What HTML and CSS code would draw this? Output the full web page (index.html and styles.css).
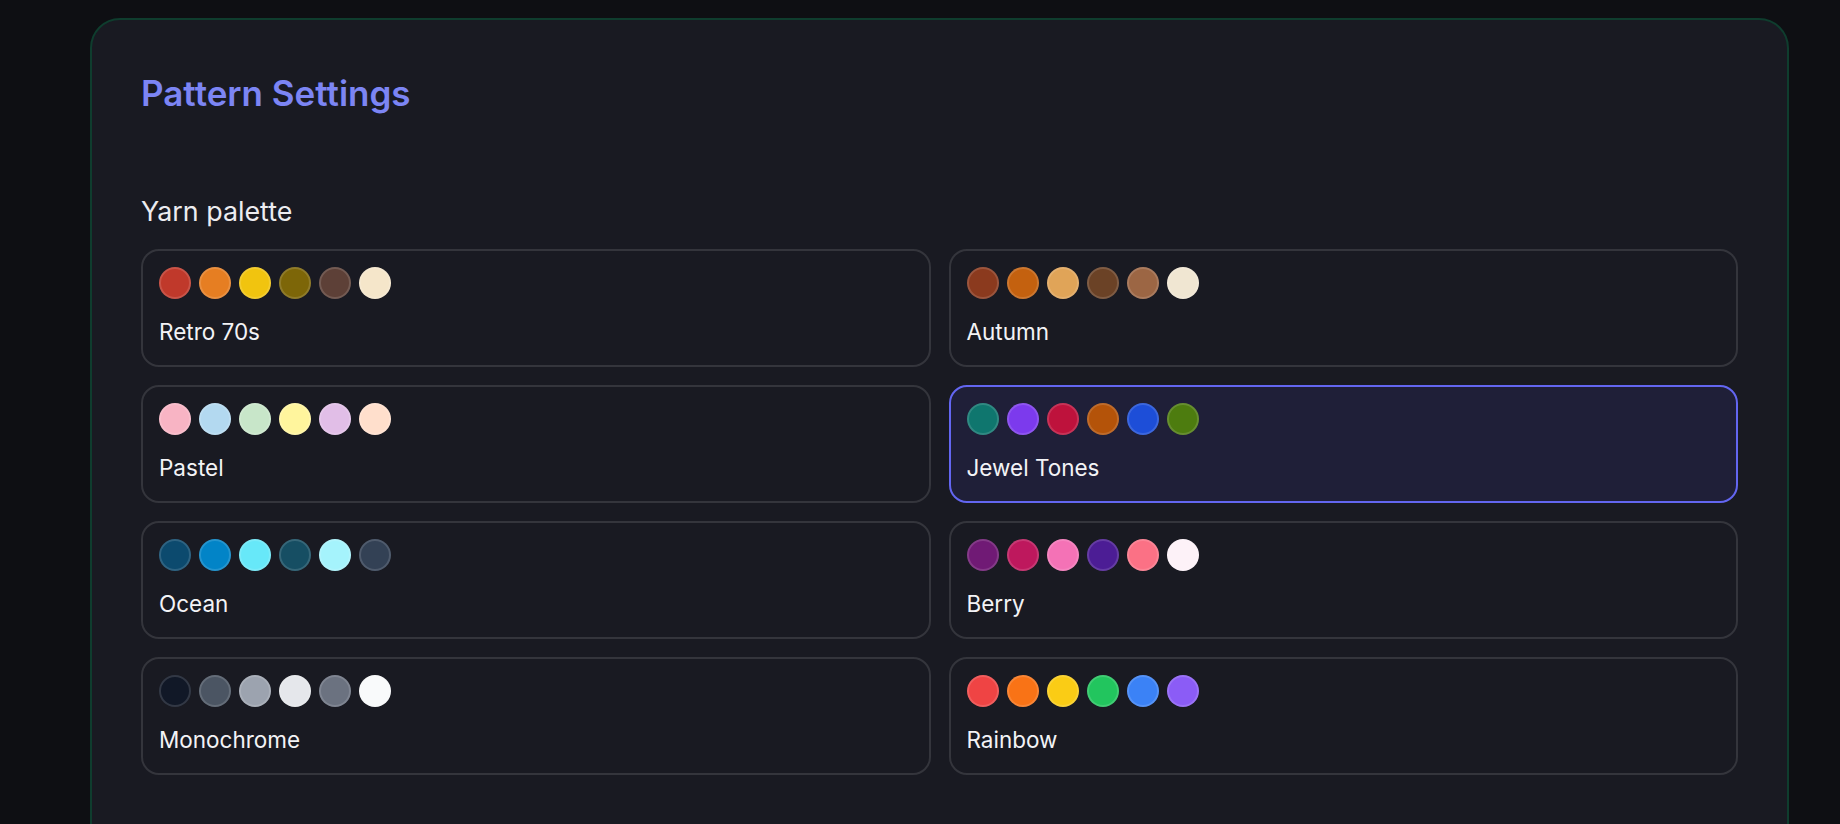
FILE: index.html
```html
<!DOCTYPE html>
<html lang="en">
<head>
  <meta charset="UTF-8" />
  <meta name="viewport" content="width=device-width, initial-scale=1.0" />
  <title>Pattern Settings</title>
  <link rel="stylesheet" href="styles.css">
</head>
<body>
  <div class="settings-panel">
    <h1>Pattern Settings</h1>

    <div class="field">
      <div class="field-label">Yarn palette</div>
      <div class="palette-grid">
        <div class="palette-card">
          <div class="swatches">
            <span class="swatch" style="background:#c0392b"></span>
            <span class="swatch" style="background:#e67e22"></span>
            <span class="swatch" style="background:#f1c40f"></span>
            <span class="swatch" style="background:#7d6608"></span>
            <span class="swatch" style="background:#5d4037"></span>
            <span class="swatch" style="background:#f5e6ca"></span>
          </div>
          <div class="palette-name">Retro 70s</div>
        </div>
        <div class="palette-card">
          <div class="swatches">
            <span class="swatch" style="background:#8b3a1e"></span>
            <span class="swatch" style="background:#c4610f"></span>
            <span class="swatch" style="background:#e0a458"></span>
            <span class="swatch" style="background:#6b4226"></span>
            <span class="swatch" style="background:#9c6644"></span>
            <span class="swatch" style="background:#f0e6d2"></span>
          </div>
          <div class="palette-name">Autumn</div>
        </div>
        <div class="palette-card">
          <div class="swatches">
            <span class="swatch" style="background:#f8b4c4"></span>
            <span class="swatch" style="background:#b3d9f0"></span>
            <span class="swatch" style="background:#c8e6c9"></span>
            <span class="swatch" style="background:#fff59d"></span>
            <span class="swatch" style="background:#e1bee7"></span>
            <span class="swatch" style="background:#ffdfcc"></span>
          </div>
          <div class="palette-name">Pastel</div>
        </div>
        <div class="palette-card selected">
          <div class="swatches">
            <span class="swatch" style="background:#0f766e"></span>
            <span class="swatch" style="background:#7c3aed"></span>
            <span class="swatch" style="background:#be123c"></span>
            <span class="swatch" style="background:#b45309"></span>
            <span class="swatch" style="background:#1d4ed8"></span>
            <span class="swatch" style="background:#4d7c0f"></span>
          </div>
          <div class="palette-name">Jewel Tones</div>
        </div>
        <div class="palette-card">
          <div class="swatches">
            <span class="swatch" style="background:#0c4a6e"></span>
            <span class="swatch" style="background:#0284c7"></span>
            <span class="swatch" style="background:#67e8f9"></span>
            <span class="swatch" style="background:#164e63"></span>
            <span class="swatch" style="background:#a5f3fc"></span>
            <span class="swatch" style="background:#334155"></span>
          </div>
          <div class="palette-name">Ocean</div>
        </div>
        <div class="palette-card">
          <div class="swatches">
            <span class="swatch" style="background:#701a75"></span>
            <span class="swatch" style="background:#be185d"></span>
            <span class="swatch" style="background:#f472b6"></span>
            <span class="swatch" style="background:#4c1d95"></span>
            <span class="swatch" style="background:#fb7185"></span>
            <span class="swatch" style="background:#fdf2f8"></span>
          </div>
          <div class="palette-name">Berry</div>
        </div>
        <div class="palette-card">
          <div class="swatches">
            <span class="swatch" style="background:#111827"></span>
            <span class="swatch" style="background:#4b5563"></span>
            <span class="swatch" style="background:#9ca3af"></span>
            <span class="swatch" style="background:#e5e7eb"></span>
            <span class="swatch" style="background:#6b7280"></span>
            <span class="swatch" style="background:#f9fafb"></span>
          </div>
          <div class="palette-name">Monochrome</div>
        </div>
        <div class="palette-card">
          <div class="swatches">
            <span class="swatch" style="background:#ef4444"></span>
            <span class="swatch" style="background:#f97316"></span>
            <span class="swatch" style="background:#facc15"></span>
            <span class="swatch" style="background:#22c55e"></span>
            <span class="swatch" style="background:#3b82f6"></span>
            <span class="swatch" style="background:#8b5cf6"></span>
          </div>
          <div class="palette-name">Rainbow</div>
        </div>
      </div>
    </div>
  </div>
</body>
</html>
```

FILE: styles.css
```css
body {
  font-family: "Inter", "Noto Sans", sans-serif;
  margin: 0;
  padding: 18px 51px 0 90px;
  background-color: #0e0f13;
  color: #f1f1f4;
}

.settings-panel {
  background-color: #191a22;
  border: 2px solid #0f3d2e;
  border-radius: 30px;
  padding: 52px 49px 60px;
  min-height: 900px;
}

h1 {
  margin: 0;
  font-size: 35px;
  line-height: 1.2;
  font-weight: 600;
  color: #7c85f4;
}

.field {
  margin-top: 79px;
}

.field-label {
  font-size: 26.8px;
  line-height: 36px;
  color: #ececf0;
  margin-bottom: 20px;
}

.palette-grid {
  display: grid;
  grid-template-columns: 1fr 1fr;
  gap: 18px;
}

.palette-card {
  border: 2px solid #34353c;
  border-radius: 18px;
  padding: 16px 16px 17px;
  cursor: pointer;
}

.palette-card.selected {
  border-color: #6366f1;
  background-color: #1f1f38;
}

.swatches {
  display: flex;
  gap: 8px;
  margin-bottom: 17px;
}

.swatch {
  width: 32px;
  height: 32px;
  border-radius: 50%;
  box-sizing: border-box;
  border: 2px solid rgba(255, 255, 255, 0.14);
}

.palette-name {
  font-size: 22.5px;
  line-height: 32px;
  color: #f3f3f6;
}
```
